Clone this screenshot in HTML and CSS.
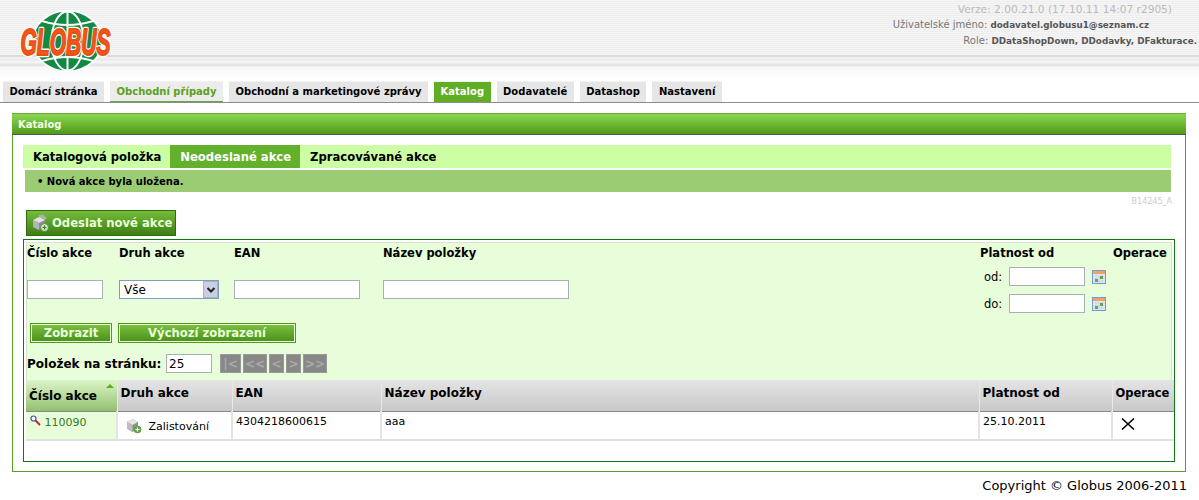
FILE: index.html
```html
<!DOCTYPE html>
<html lang="cs">
<head>
  <meta charset="UTF-8" />
  <title>Katalog</title>
  <link rel="stylesheet" href="styles.css">
</head>
<body>
<header class="top">
  <svg class="logo" width="96" height="64" viewBox="0 0 96 64">
    <ellipse cx="49.500" cy="31" rx="36" ry="31" fill="#fff"/>
    <ellipse cx="49.500" cy="31" rx="34" ry="29.500" fill="#128a43"/>
    <g fill="none" stroke="#fff" stroke-width="2">
      <ellipse cx="49.500" cy="31" rx="16" ry="29.500"/>
      <line x1="49.500" y1="2" x2="49.500" y2="60"/>
      <path d="M24 11 Q49.500 19 75 11"/>
      <path d="M24 51 Q49.500 43 75 51"/>
    </g>
    <text x="47.500" y="45" class="logo-shadow" text-anchor="middle" textLength="90" lengthAdjust="spacingAndGlyphs">GLOBUS</text>
    <text x="47.500" y="45" class="logo-text" text-anchor="middle" textLength="90" lengthAdjust="spacingAndGlyphs">GLOBUS</text>
  </svg>
  <div class="info">
    <div class="version">Verze: 2.00.21.0 (17.10.11 14:07 r2905)</div>
    <div class="user">Uživatelské jméno: <b>dodavatel.globusu1@seznam.cz</b></div>
    <div>Role: <b>DDataShopDown, DDodavky, DFakturace.</b></div>
  </div>
</header>

<nav class="tabs">
  <a class="tab">Domácí stránka</a>
  <a class="tab tab-visited">Obchodní případy</a>
  <a class="tab">Obchodní a marketingové zprávy</a>
  <a class="tab tab-active">Katalog</a>
  <a class="tab">Dodavatelé</a>
  <a class="tab">Datashop</a>
  <a class="tab">Nastavení</a>
</nav>

<main class="panel">
  <h2 class="panel-title">Katalog</h2>
  <div class="panel-body">
    <div class="subtabs">
      <a class="subtab">Katalogová položka</a>
      <a class="subtab subtab-active">Neodeslané akce</a>
      <a class="subtab">Zpracovávané akce</a>
    </div>
    <div class="message">• Nová akce byla uložena.</div>
    <div class="code">B14245_A</div>

    <button class="send-btn">
      <svg width="18" height="18" viewBox="0 0 18 18">
        <path d="M8 1h3V0l5 4-5 4V6H8z" fill="#a9b5a5"/>
        <path d="M2 6l6-3 6 3v7l-6 3-6-3z" fill="#8c8c8c"/>
        <path d="M2 6l6 3 6-3-6-3z" fill="#e2e2e2"/>
        <path d="M8 9v7l-6-3V6z" fill="#b3b3b3"/>
        <circle cx="13.500" cy="13.500" r="4" fill="#d4e8c8" stroke="#4f8a3c"/>
        <path d="M13.500 11.500v4M11.500 13.500h4" stroke="#3b7a2a" stroke-width="1.200"/>
      </svg>
      Odeslat nové akce
    </button>

    <section class="box">
      <div class="filter">
        <div class="filter-grid">
          <div class="f-col f-num">
            <label class="f-label">Číslo akce</label>
            <input class="field f-input-num" type="text">
          </div>
          <div class="f-col f-kind">
            <label class="f-label">Druh akce</label>
            <div class="select-wrap">
              <select class="select"><option>Vše</option></select>
              <span class="select-arrow">
                <svg width="12" height="12" viewBox="0 0 12 12"><path d="M2.500 4L6 7.500 9.500 4" fill="none" stroke="#222" stroke-width="2"/></svg>
              </span>
            </div>
          </div>
          <div class="f-col f-ean">
            <label class="f-label">EAN</label>
            <input class="field f-input-ean" type="text">
          </div>
          <div class="f-col f-name">
            <label class="f-label">Název položky</label>
            <input class="field f-input-name" type="text">
          </div>
          <div class="f-col f-valid">
            <label class="f-label">Platnost od</label>
            <div class="date-row">
              <span class="date-label">od:</span>
              <input class="field f-input-date" type="text">
              <svg class="cal" width="14" height="14" viewBox="0 0 14 14">
                <rect x=".5" y=".5" width="13" height="13" fill="#e4eefa" stroke="#6f9bd6"/>
                <rect x="1" y="1" width="12" height="3" fill="#f5a066"/>
                <path d="M1 6h12M1 8.500h12M1 11h12M4 4v9M7 4v9M10 4v9" stroke="#b9c9dc" stroke-width=".6"/>
                <rect x="3" y="9" width="3" height="3" fill="#62a84a"/>
                <rect x="8" y="6" width="3" height="3" fill="#62a84a"/>
              </svg>
            </div>
            <div class="date-row">
              <span class="date-label">do:</span>
              <input class="field f-input-date" type="text">
              <svg class="cal" width="14" height="14" viewBox="0 0 14 14">
                <rect x=".5" y=".5" width="13" height="13" fill="#e4eefa" stroke="#6f9bd6"/>
                <rect x="1" y="1" width="12" height="3" fill="#f5a066"/>
                <path d="M1 6h12M1 8.500h12M1 11h12M4 4v9M7 4v9M10 4v9" stroke="#b9c9dc" stroke-width=".6"/>
                <rect x="3" y="9" width="3" height="3" fill="#62a84a"/>
                <rect x="8" y="6" width="3" height="3" fill="#62a84a"/>
              </svg>
            </div>
          </div>
          <div class="f-col f-ops">
            <label class="f-label">Operace</label>
          </div>
        </div>

        <div class="filter-actions">
          <button class="green-btn btn-show">Zobrazit</button>
          <button class="green-btn btn-reset">Výchozí zobrazení</button>
        </div>

        <div class="pager">
          <span class="pager-label">Položek na stránku:</span>
          <input class="field pager-size" type="text" value="25">
          <div class="pager-btns">
            <span class="pg pg-first">|&lt;</span>
            <span class="pg pg-wide">&lt;&lt;</span>
            <span class="pg">&lt;</span>
            <span class="pg">&gt;</span>
            <span class="pg pg-wide">&gt;&gt;</span>
          </div>
        </div>
      </div>

      <table class="grid">
        <colgroup>
          <col class="c1"><col class="c2"><col class="c3"><col class="c4"><col class="c5"><col class="c6">
        </colgroup>
        <thead>
          <tr>
            <th class="sorted">Číslo akce<span class="sort-arrow"></span></th>
            <th>Druh akce</th>
            <th>EAN</th>
            <th>Název položky</th>
            <th>Platnost od</th>
            <th class="th-ops">Operace</th>
          </tr>
        </thead>
        <tbody>
          <tr>
            <td class="td-num">
              <svg width="11" height="11" viewBox="0 0 11 11">
                <circle cx="3.500" cy="3.500" r="2.500" fill="#fff" stroke="#3a4fb0" stroke-width="1.200"/>
                <path d="M5.500 5.500L10 10" stroke="#c81e1e" stroke-width="1.800"/>
              </svg>
              <a class="link">110090</a>
            </td>
            <td class="td-kind">
              <svg width="16" height="16" viewBox="0 0 16 16">
                <path d="M1 4l5.500-3L12 4v6.500L6.500 14 1 10.500z" fill="#8f8f8f"/>
                <path d="M1 4l5.500 3L12 4 6.500 1z" fill="#e6e6e6"/>
                <path d="M6.500 7v7L1 10.500V4z" fill="#bdbdbd"/>
                <circle cx="11.500" cy="11.500" r="3.800" fill="#5da34a"/>
                <path d="M11.500 9.500v4M9.500 11.500h4" stroke="#fff" stroke-width="1.200"/>
              </svg>
              <span>Zalistování</span>
            </td>
            <td>4304218600615</td>
            <td>aaa</td>
            <td>25.10.2011</td>
            <td class="td-ops">
              <svg width="14" height="14" viewBox="0 0 14 14"><path d="M1 1.500L13 12.500M13 1.500L1 12.500" stroke="#000" stroke-width="1.600"/></svg>
            </td>
          </tr>
        </tbody>
      </table>
    </section>
  </div>
</main>

<footer class="copy">Copyright © Globus 2006-2011</footer>
</body>
</html>
```

FILE: styles.css
```css
body {
  margin: 0;
  font-family: "DejaVu Sans", sans-serif;
  font-size: 11px;
  color: #000;
  background: #fff;
  overflow: hidden;
}

/* header */
.top {
  height: 81px;
  box-sizing: border-box;
  padding: 10px 2px 0 18px;
  display: flex;
  justify-content: space-between;
  align-items: flex-start;
  background:
    linear-gradient(180deg, transparent 55px, #dcdcdc 55px, #dcdcdc 57px, #f2f2f2 57px, #eaeaea 60px, #f7f7f7 62px, #e2e2e2 65px, #e8e8e8 66px, #f8f8f8 67px, #fff 80px),
    repeating-linear-gradient(180deg, #f5f5f5 0, #f5f5f5 1px, #eeeeee 1px, #eeeeee 2px);
}

.logo { flex: none; display: block; overflow: visible; }

.logo-text, .logo-shadow {
  font-family: "Liberation Sans", sans-serif;
  font-weight: 700;
  font-style: italic;
  font-size: 37px;
}
.logo-text { fill: #f0561e; stroke: #e9500f; stroke-width: 1.800px; }
.logo-shadow { fill: none; stroke: #fff; stroke-width: 4.500px; stroke-linejoin: round; }

.info {
  text-align: right;
  font-size: 10px;
  line-height: 16px;
  color: #777;
  margin-top: -9px;
  white-space: nowrap;
}
.info div { height: 16px; }
.info b { color: #555; font-size: 8.800px; }
.version { color: #bbb; margin-right: 25px; font-size: 10.600px; }
.user { margin-right: 48px; }

/* main tabs */
.tabs {
  display: flex;
  gap: 6px;
  padding-left: 3px;
  height: 21px;
  border-bottom: 1px solid #8c8c8c;
}
.tab {
  padding: 0 6.500px;
  line-height: 20px;
  font-size: 10px;
  font-weight: 700;
  background: #e6e6e6;
  border-top: 1px solid #f2f2f2;
  white-space: nowrap;
}
.tab-visited { color: #5ba020; background: #ececec; border-bottom: 1px solid #6ea83d; }
.tab-active { color: #fff; background: #5fae24; }

/* panel */
.panel {
  margin: 10px 12px 0;
  height: 359px;
  width: 1174px;
  box-sizing: border-box;
  border: 1px solid #56a11e;
  border-top: 0;
}
.panel-title {
  margin: 0 -1px;
  height: 22px;
  line-height: 22px;
  padding-left: 6px;
  font-size: 10px;
  font-weight: 700;
  color: #f2ffe8;
  background: linear-gradient(180deg, #8bd651, #4f9a1a);
  border-top: 1px solid #6aae36;
  border-bottom: 1px solid #555;
  box-sizing: border-box;
}
.panel-body { padding: 10px 10px 0; }

.subtabs {
  display: flex;
  height: 23px;
  background: #ccffa3;
  margin-right: 4px;
}
.subtab {
  padding: 0 9px 0 10px;
  line-height: 24px;
  font-size: 11.600px;
  font-weight: 700;
  white-space: nowrap;
}
.subtab-active { background: #63b02a; color: #fff; }

.message {
  margin: 2px 4px 0 2px;
  height: 22px;
  line-height: 23px;
  padding-left: 12px;
  font-size: 10px;
  font-weight: 700;
  background: #9bcc73;
}
.code {
  margin-right: 3px;
  height: 18px;
  line-height: 19px;
  text-align: right;
  font-size: 8px;
  color: #ccc;
}

.send-btn {
  display: flex;
  align-items: center;
  gap: 3px;
  margin-left: 3px;
  width: 150px;
  height: 26px;
  padding: 0 0 0 4px;
  font: 700 11.600px "DejaVu Sans", sans-serif;
  color: #e8ffd8;
  background: linear-gradient(180deg, #75bd3a, #3f7d14);
  border: 1px solid #2f6b10;
  white-space: nowrap;
}

/* filter + results */
.box {
  margin-top: 3px;
  width: 1152px;
  height: 223px;
  box-sizing: border-box;
  border: 1px solid #0f7a0f;
  padding: 2px;
}
.filter {
  height: 138px;
  box-sizing: border-box;
  background: #e8fdd9;
  border: 1px solid #d8e4d0;
  border-bottom: 0;
}
.filter-grid {
  display: grid;
  grid-template-columns: 92px 115px 149px 597px 133px 1fr;
  height: 78px;
}
.f-col { padding: 3px 0 0; }
.f-label {
  display: block;
  font-size: 11.500px;
  font-weight: 700;
  line-height: 14px;
  height: 34px;
  white-space: nowrap;
}
.f-valid .f-label { height: 14px; margin-bottom: 7px; }
.field {
  display: block;
  box-sizing: border-box;
  height: 19px;
  padding: 0 2px;
  font: 12px "DejaVu Sans", sans-serif;
  background: #fff;
  border: 1px solid #a9b0b5;
  border-radius: 0;
}
.f-input-num { width: 76px; }
.f-input-ean { width: 126px; }
.f-input-name { width: 186px; }
.f-input-date { width: 76px; }

.select-wrap { position: relative; width: 100px; height: 19px; }
.select {
  appearance: none;
  display: block;
  width: 100%;
  height: 19px;
  box-sizing: border-box;
  padding: 0 4px;
  font: 12px "DejaVu Sans", sans-serif;
  background: #fff;
  border: 1px solid #7f9db9;
  border-radius: 0;
}
.select-arrow {
  position: absolute;
  top: 1px;
  right: 1px;
  width: 15px;
  height: 17px;
  display: flex;
  align-items: center;
  justify-content: center;
  background: #c9cfe2;
  border: 1px solid #aab3cc;
  box-sizing: border-box;
}

.date-row {
  display: flex;
  align-items: center;
  height: 19px;
  margin-bottom: 8px;
}
.date-label { width: 29px; padding-left: 4px; box-sizing: border-box; font-size: 11.500px; }
.cal { margin-left: 7px; }
.f-valid { height: 98px; }

.filter-actions {
  display: flex;
  gap: 6px;
  padding: 2px 0 0 3px;
}
.green-btn {
  height: 20px;
  padding: 0;
  font: 700 11.600px "DejaVu Sans", sans-serif;
  color: #eaffdc;
  background: linear-gradient(180deg, #7cc23e, #4a8f1a);
  border: 1px solid #4f9a1a;
  outline: 1px solid #e8fdd9;
  outline-offset: -2px;
}
.btn-show { width: 82px; }
.btn-reset { width: 178px; }

.pager {
  display: flex;
  align-items: center;
  padding: 11px 0 0 0;
}
.pager-label { font-size: 12px; font-weight: 700; width: 139px; white-space: nowrap; }
.pager-size { width: 46px; }
.pager-btns { display: flex; gap: 2px; margin-left: 8px; }
.pg {
  width: 15px;
  height: 19px;
  line-height: 18px;
  text-align: center;
  font-size: 12px;
  font-weight: 700;
  color: #aaa;
  background: #888;
  border: 1px solid #999;
  box-sizing: border-box;
}
.pg-first { width: 21px; }
.pg-wide { width: 24px; }

.grid {
  width: 1148px;
  table-layout: fixed;
  border-collapse: collapse;
}
.c1 { width: 91px; }
.c2 { width: 115px; }
.c3 { width: 149px; }
.c4 { width: 598px; }
.c5 { width: 133px; }
.c6 { width: 62px; }
.grid th {
  height: 31px;
  padding: 0 3px 5px;
  box-sizing: border-box;
  text-align: left;
  font-size: 12px;
  font-weight: 700;
  white-space: nowrap;
  background: linear-gradient(180deg, #e4e4e4, #c8c8c8);
  border-left: 1px solid #e8e8e8;
  border-bottom: 1px solid #888;
}
.grid th.sorted {
  background: linear-gradient(180deg, #dcf5c8, #94c070);
  padding-top: 2px;
  padding-bottom: 0;
  padding-left: 3px;
  position: relative;
  border-left: 0;
}
.grid th.th-ops { font-size: 11.500px; }
.sort-arrow {
  position: absolute;
  top: 4px;
  right: 3px;
  border: 4px solid transparent;
  border-top: 0;
  border-bottom: 4px solid #5fae24;
}
.grid td {
  height: 29px;
  padding: 3px 3px 0;
  box-sizing: border-box;
  vertical-align: top;
  border-left: 2px solid #e4e4e4;
  border-bottom: 2px solid #e0e0e0;
  white-space: nowrap;
  font-size: 11px;
}
.grid td.td-num {
  background: #e8fdd9;
  border-left: 0;
  padding-left: 4px;
}
.link { color: #2f7d20; }
.grid td.td-kind { padding: 6px 0 0 8px; }
.td-kind svg { vertical-align: -4px; margin-right: 3px; }
.grid td.td-ops { padding: 5px 0 0 8px; }

.copy {
  margin: 6px 12px 0 0;
  text-align: right;
  font-size: 13px;
  line-height: 15px;
}
```
